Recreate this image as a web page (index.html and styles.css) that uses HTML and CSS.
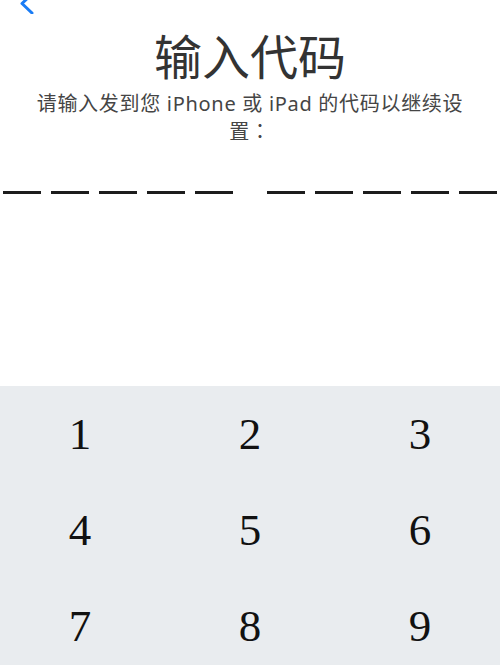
FILE: index.html
```html
<!DOCTYPE html>
<html lang="zh-CN">
<head>
    <meta charset="UTF-8">
    <meta name="viewport" content="width=device-width, initial-scale=1.0">
    <title>输入代码</title>
    <link rel="stylesheet" href="styles.css">
</head>
<body>

    <div class="nav">
        <a class="back" href="#" aria-label="返回">
            <svg width="16" height="16" viewBox="0 0 16 16">
                <path d="M12 -6 L2 3.5 L12 13" fill="none" stroke="#1a7cf5" stroke-width="3" stroke-linecap="round" stroke-linejoin="round"/>
            </svg>
        </a>
    </div>

    <h1 class="title">输入代码</h1>
    <p class="subtitle">请输入发到您 iPhone 或 iPad 的代码以继续设置<span class="colon" lang="zh-TW">：</span></p>

    <!-- two groups of five code slots -->
    <div class="code">
        <div class="group">
            <span class="slot"></span>
            <span class="slot"></span>
            <span class="slot"></span>
            <span class="slot"></span>
            <span class="slot"></span>
        </div>
        <div class="group">
            <span class="slot"></span>
            <span class="slot"></span>
            <span class="slot"></span>
            <span class="slot"></span>
            <span class="slot"></span>
        </div>
    </div>

    <div class="keypad">
        <button class="key">1</button>
        <button class="key">2</button>
        <button class="key">3</button>
        <button class="key">4</button>
        <button class="key">5</button>
        <button class="key">6</button>
        <button class="key">7</button>
        <button class="key">8</button>
        <button class="key">9</button>
    </div>

</body>
</html>
```

FILE: styles.css
```css
html, body {
    margin: 0;
    height: 665px;
    overflow: hidden;
    background-color: #fff;
}

body {
    font-family: "Noto Sans", "Noto Sans CJK SC", sans-serif;
    color: #333;
}

.nav {
    height: 14px;
    padding-left: 20px;
}

.back {
    display: block;
    width: 16px;
    height: 14px;
    overflow: hidden;
}

.back svg {
    display: block;
}

.title {
    margin: 14px 0 0;
    font-size: 48px;
    line-height: 58px;
    font-weight: 400;
    text-align: center;
    color: #333;
}

.subtitle {
    margin: 4px auto 0;
    width: 450px;
    font-size: 20px;
    line-height: 27px;
    letter-spacing: 0.7px;
    text-align: center;
    color: #454545;
}

/* centred full-width colon */
.colon {
    font-family: "Noto Sans CJK TC", sans-serif;
}

.code {
    display: flex;
    justify-content: center;
    gap: 34px;
    margin-top: 46px;
}

.group {
    display: flex;
    gap: 10px;
}

.slot {
    display: block;
    width: 38px;
    height: 3px;
    background-color: #1c1c1c;
}

.keypad {
    display: grid;
    grid-template-columns: repeat(3, 1fr);
    grid-auto-rows: 96px;
    margin: 192px -5px 0;
    background-color: #e9ecef;
    height: 288px;
}

.key {
    border: none;
    background: none;
    padding: 0;
    font-family: "Liberation Serif", serif;
    font-size: 45px;
    color: #111;
    cursor: pointer;
}
```
